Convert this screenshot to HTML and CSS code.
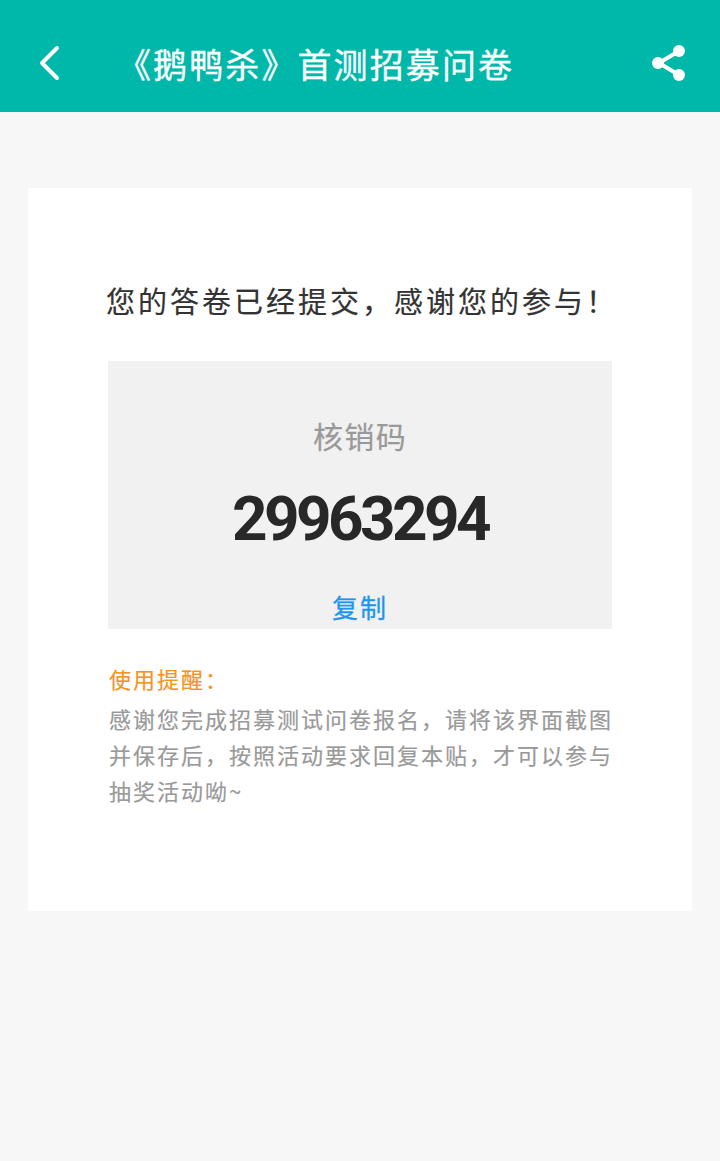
FILE: index.html
```html
<!DOCTYPE html>
<html lang="zh-CN">
<head>
<meta charset="utf-8">
<title>《鹅鸭杀》首测招募问卷</title>
<link rel="stylesheet" href="styles.css">
</head>
<body>
<header class="bar">
  <svg class="back" width="24" height="36" viewBox="0 0 24 36"><path d="M21 3 L6 18 L21 33" fill="none" stroke="#fff" stroke-width="4" stroke-linecap="round" stroke-linejoin="round"/></svg>
  <h1 class="title">《鹅鸭杀》首测招募问卷</h1>
  <svg class="share" width="36" height="38" viewBox="0 0 36 38"><path d="M28 7 L8 19 L28 31" fill="none" stroke="#fff" stroke-width="4"/><circle cx="28" cy="7" r="6" fill="#fff"/><circle cx="7" cy="19" r="6" fill="#fff"/><circle cx="28" cy="31" r="6" fill="#fff"/></svg>
</header>
<main class="card">
  <h2 class="heading">您的答卷已经提交，感谢您的参与！</h2>
  <section class="codebox">
    <div class="codelabel">核销码</div>
    <div class="code">29963294</div>
    <a class="copy">复制</a>
  </section>
  <section class="notes">
    <div class="notetitle">使用提醒：</div>
    <p class="notetext">感谢您完成招募测试问卷报名，请将该界面截图并保存后，按照活动要求回复本贴，才可以参与抽奖活动呦~</p>
  </section>
</main>
</body>
</html>
```
FILE: styles.css
```css
* { box-sizing: border-box; margin: 0; padding: 0; }
html, body { height: 100%; }
body {
  background: #f7f7f7;
  font-family: "Noto Sans CJK SC", "Noto Sans", sans-serif;
  overflow: hidden;
}
.bar {
  height: 112px;
  background: #00b8a9;
  display: flex;
  align-items: center;
  padding: 14px 33px 0 36px;
}
.back { flex: none; }
.title {
  flex: 1;
  margin-left: 57px;
  font-size: 34px;
  font-weight: 400;
  -webkit-text-stroke: 0.35px #fff;
  letter-spacing: 2.1px;
  color: #fff;
  white-space: nowrap;
}
.share { flex: none; }
.card {
  margin: 76px 28px 0;
  height: 723px;
  background: #fff;
  padding: 89px 80px 0;
}
.heading {
  font-size: 29px;
  font-weight: 400;
  -webkit-text-stroke: 0.2px #333;
  line-height: 46px;
  letter-spacing: 3px;
  color: #333;
  white-space: nowrap;
  margin-left: -2px;
}
.codebox {
  margin-top: 38px;
  height: 268px;
  background: #f1f1f1;
  display: flex;
  flex-direction: column;
  align-items: center;
}
.codelabel {
  margin-top: 52px;
  font-size: 30px;
  line-height: 44px;
  letter-spacing: 1.4px;
  color: #999;
  -webkit-text-stroke: 0.2px #999;
}
.code {
  margin-top: 26px;
  font-family: Roboto, sans-serif;
  font-size: 62px;
  font-weight: 700;
  line-height: 72px;
  letter-spacing: -3.6px;
  color: #282828;
}
.copy {
  margin-top: 33px;
  font-size: 26px;
  font-weight: 400;
  -webkit-text-stroke: 0.3px #1e96f0;
  line-height: 38px;
  letter-spacing: 2px;
  color: #1e96f0;
}
.notes { margin-top: 32px; margin-left: 1px; }
.notetitle {
  font-size: 22px;
  line-height: 34px;
  letter-spacing: 2px;
  color: #f7931e;
  -webkit-text-stroke: 0.2px #f7931e;
}
.notetext {
  margin-top: 5px;
  font-size: 22px;
  line-height: 36px;
  letter-spacing: 2px;
  color: #999;
  -webkit-text-stroke: 0.2px #999;
  width: 506px;
}
```
